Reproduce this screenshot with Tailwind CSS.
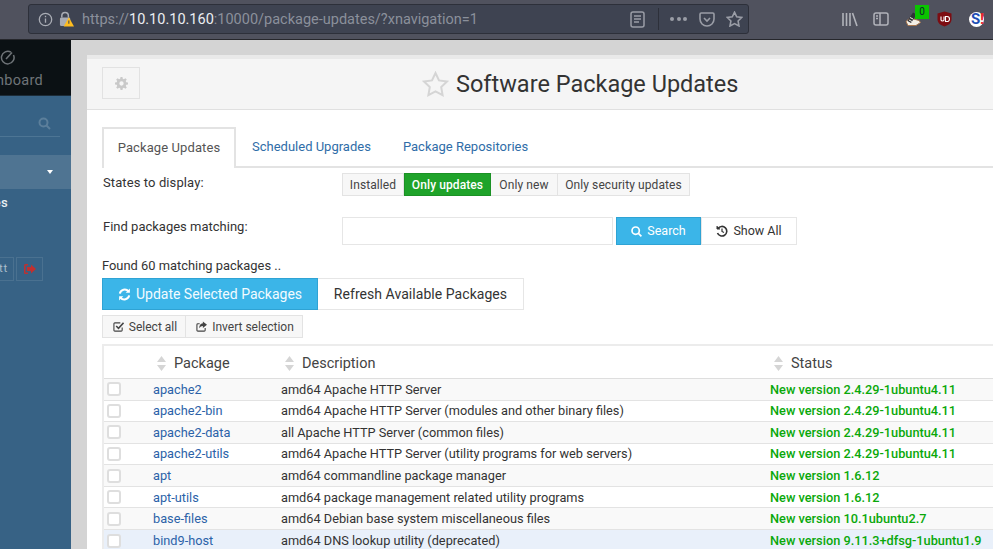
<!DOCTYPE html>
<html lang="en">
<head>
  <meta charset="UTF-8">
  <title>Software Package Updates</title>
  <script src="https://cdn.jsdelivr.net/npm/@tailwindcss/browser@4"></script>
</head>
<body class="w-[993px] h-[549px] overflow-hidden bg-[#d4d4d4] font-['Roboto',sans-serif] text-[#333] flex flex-col">

  <!-- browser toolbar -->
  <div class="h-[40px] shrink-0 bg-[#50525e] border-b border-[#26272c] flex items-center pl-[28px] pb-[5px] pt-[4px]">
    <div class="w-[721px] h-[30px] bg-[#3e4351] border border-[#2d303a] rounded-[3px] flex items-center pl-[9px] text-[#8b909b]">
      <svg class="w-[15px] h-[15px] shrink-0" viewBox="0 0 16 16" fill="none" stroke="#a9acb4" stroke-width="1.4"><circle cx="8" cy="8" r="6.6"/><path d="M8 7v4.500M8 4v1.600"/></svg>
      <svg class="w-[15px] h-[16px] ml-[6px] shrink-0" viewBox="0 0 16 17"><path d="M3 7V5a3.500 3.500 0 0 1 7 0v2" fill="none" stroke="#a9acb4" stroke-width="1.600"/><rect x="1" y="7" width="11" height="9" rx="1.500" fill="#a9acb4"/><path d="M10.500 6.500L16 16.500H5z" fill="#ffbd1f"/><path d="M10.500 10v3.500" stroke="#3e4351" stroke-width="1.100"/></svg>
      <span class="ml-[8px] mt-[2px] text-[14.500px] whitespace-nowrap">https://<span class="text-[#eceef1]">10.10.10.160</span>:10000/package-updates/?xnavigation=1</span>
      <svg class="w-[15px] h-[17px] ml-auto shrink-0" viewBox="0 0 15 17" fill="none" stroke="#9a9da6" stroke-width="1.500"><rect x="1" y="1" width="13" height="15" rx="2"/><path d="M4 5h7M4 8h7M4 11h5"/></svg>
      <div class="w-px h-[22px] bg-[#2d303a] ml-[13px]"></div>
      <div class="ml-[11px] flex gap-[2.500px]">
        <div class="w-[4px] h-[4px] rounded-full bg-[#9a9da6]"></div>
        <div class="w-[4px] h-[4px] rounded-full bg-[#9a9da6]"></div>
        <div class="w-[4px] h-[4px] rounded-full bg-[#9a9da6]"></div>
      </div>
      <svg class="w-[16px] h-[15px] ml-[12px] shrink-0" viewBox="0 0 16 15" fill="none" stroke="#9a9da6" stroke-width="1.600"><path d="M1 2.200Q1 1 2.200 1h11.600Q15 1 15 2.200V7a7 7 0 0 1-14 0z"/><path d="M5 6l3 3 3-3"/></svg>
      <svg class="w-[17px] h-[16px] ml-[11px] mr-[5px] shrink-0" viewBox="0 0 17 16" fill="none" stroke="#9a9da6" stroke-width="1.600"><path d="M8.500 1.200l2.200 4.600 5 .7-3.600 3.500.9 5-4.500-2.400L4 15l.9-5L1.300 6.500l5-.7z"/></svg>
    </div>
    <!-- right toolbar icons -->
    <svg class="w-[16px] h-[15px] ml-[93px] shrink-0" viewBox="0 0 16 15" fill="none" stroke="#b1b3ba" stroke-width="1.600"><path d="M1 1v13M4.500 1v13M8 1v13M10.500 1l4.500 13"/></svg>
    <svg class="w-[16px] h-[14px] ml-[15px] shrink-0" viewBox="0 0 16 14" fill="none" stroke="#b1b3ba" stroke-width="1.500"><rect x="1" y="1" width="14" height="12" rx="2"/><path d="M7 1v12M3 4h2M3 6.500h2"/></svg>
    <div class="relative w-[16px] h-[14px] ml-[16px] shrink-0">
      <svg class="w-[16px] h-[14px]" viewBox="0 0 16 14"><path d="M1 9.500L5 6l9 2.500 1.500 2L11 13.500H3z" fill="#f3efe6" stroke="#a8774e" stroke-width="1"/><path d="M2.500 9L8 0.500l3.500 2L6 11z" fill="#2f3036"/><path d="M5 5.500l3 1.500M4 8l3 1.500" stroke="#f3efe6" stroke-width="1"/></svg>
      <div class="absolute left-[10px] top-[-7px] w-[14px] h-[14px] bg-[#0ac400] text-[#123] text-[10px] leading-[14px] text-center">0</div>
    </div>
    <svg class="w-[15px] h-[16px] ml-[16px] shrink-0" viewBox="0 0 15 16"><path d="M7.500 0.500L14.500 2.500V9Q14 13.500 7.500 15.500 1 13.500 .5 9V2.500z" fill="#7d0d12"/><path d="M4 5.500v3.500a1.600 1.600 0 0 0 3 0V5.500M8.500 5.500v5H10a2.500 2.500 0 0 0 0-5z" fill="none" stroke="#fff" stroke-width="1.100"/></svg>
    <div class="relative w-[15px] h-[15px] ml-[17px] shrink-0 rounded-full bg-white text-[#1f4fb5] text-[15px] leading-[15px] font-bold text-center pr-[2px]">S<span class="absolute left-[11px] top-0 text-[#e8232a]">!</span></div>
  </div>

  <div class="flex flex-1 min-h-0">
    <!-- sidebar -->
    <div class="w-[71px] shrink-0 bg-[#376285] flex flex-col overflow-hidden">
      <div class="h-[56px] shrink-0 bg-[#0b1114] border-b border-[#1c2c38] flex flex-col items-end pr-[28px] pt-[10px]">
        <svg class="w-[15px] h-[15px] mr-[28px] shrink-0" viewBox="0 0 15 15" fill="none" stroke="#6f7478" stroke-width="1.500"><path d="M11 2.200A6.300 6.300 0 1 0 13.500 5"/><path d="M6 9l6-6.500"/></svg>
        <span class="text-[14.500px] leading-[17px] mt-[7px] text-[#6f7478] whitespace-nowrap tracking-[0.3px]">Dashboard</span>
      </div>
      <div class="h-[41px] mx-[-8px] shrink-0 pr-[9px] flex justify-end items-center pt-[14px] border-b border-[#4d7594] mr-[11px]">
        <svg class="w-[13px] h-[13px]" viewBox="0 0 13 13" fill="none" stroke="#5c7f9b" stroke-width="2"><circle cx="5.500" cy="5.500" r="4"/><path d="M8.500 8.500l3.500 3.500"/></svg>
      </div>
      <div class="h-[34px] mt-[18px] shrink-0 bg-[#4f7492] flex justify-end items-center pr-[18px]">
        <div class="w-0 h-0 border-x-[3.500px] border-x-transparent border-t-[4px] border-t-white"></div>
      </div>
      <div class="h-[27px] shrink-0 flex justify-end items-center pr-[63px] text-[13px] font-medium text-[#eaf0f4] tracking-[0.3px] whitespace-nowrap">Updates</div>
      <div class="flex justify-end gap-[2px] pr-[28px] mt-[41px]">
        <div class="h-[24px] w-[40px] shrink-0 border border-[#4a7190] flex items-center justify-end pr-[5px] text-[11.500px] text-[#a9bccb] tracking-[0.8px]">tt</div>
        <div class="h-[24px] w-[27px] shrink-0 border border-[#4a7190] flex items-center justify-center">
          <svg class="w-[12px] h-[10px]" viewBox="0 0 12 10" fill="#bf3030"><path d="M0 1.500A1.500 1.500 0 0 1 1.500 0H4v1.500H1.500v7H4V10H1.500A1.500 1.500 0 0 1 0 8.500z"/><path d="M3 3h4V.5L12 5l-5 4.500V7H3z"/></svg>
        </div>
      </div>
    </div>

    <!-- gutter + panel -->
    <div class="flex-1 min-w-0 pl-[16px] pt-[15px]">
      <div class="h-full bg-white overflow-hidden">
        <div class="h-[55px] bg-[#f5f5f5] border-t-[4px] border-t-[#e9e9e9] border-b border-b-[#e0e0e0] relative flex items-center">
          <div class="absolute left-[15px] top-[8px] w-[38px] h-[32px] border border-[#e2e2e2] flex items-center justify-center">
            <svg class="w-[13px] h-[13px]" viewBox="0 0 24 24" fill="#c9c9c9"><path d="M24 13.800v-3.600l-3.300-.6a9 9 0 0 0-.9-2.100l1.900-2.800-2.500-2.500-2.800 1.900a9 9 0 0 0-2.100-.9L13.800 0h-3.600l-.6 3.200a9 9 0 0 0-2.100.9L4.700 2.200 2.200 4.700l1.900 2.800a9 9 0 0 0-.9 2.100L0 10.200v3.600l3.200.6a9 9 0 0 0 .9 2.100l-1.900 2.800 2.500 2.500 2.800-1.900a9 9 0 0 0 2.100.9l.6 3.200h3.600l.6-3.200a9 9 0 0 0 2.100-.9l2.800 1.900 2.500-2.500-1.900-2.800a9 9 0 0 0 .9-2.100zM12 16a4 4 0 1 1 0-8 4 4 0 0 1 0 8z"/></svg>
          </div>
          <div class="flex items-center gap-[7px] ml-[335px]">
            <svg class="w-[27px] h-[26px]" viewBox="0 0 27 26" fill="none" stroke="#d5d5d5" stroke-width="2"><path d="M13.500 2l3.500 7.400 8 1.100-5.800 5.600 1.400 8-7.100-3.800-7.100 3.800 1.400-8L2 10.500l8-1.100z"/></svg>
            <h1 class="text-[23.500px] leading-[30px] text-[#333] whitespace-nowrap">Software Package Updates</h1>
          </div>
        </div>

        <div class="pl-[15px] pt-[17px]">
          <!-- tabs -->
          <div class="h-[41px] flex border-b-2 border-[#e3e3e3] text-[13px]">
            <div class="w-[134px] h-[41px] pb-[2px] border-2 border-b-0 border-[#e3e3e3] bg-white flex items-center justify-center text-[#555] tracking-[0.1px]">Package Updates</div>
            <div class="ml-[16px] h-[40px] flex items-center text-[#2f6da8]">Scheduled Upgrades</div>
            <div class="ml-[32px] h-[40px] flex items-center text-[#2f6da8]">Package Repositories</div>
          </div>

          <!-- states -->
          <div class="flex mt-[5px] h-[24px] text-[13px]">
            <div class="w-[240px] pl-px leading-[20px] tracking-[0.1px]">States to display:</div>
            <div class="flex text-[12px] text-[#444] tracking-[0.1px]">
              <div class="h-[23px] w-[62px] bg-[#f7f7f7] border border-[#e3e3e3] flex items-center justify-center">Installed</div>
              <div class="h-[23px] w-[87px] bg-[#1fa32a] border border-[#1b9125] text-white font-medium flex items-center justify-center">Only updates</div>
              <div class="h-[23px] w-[66px] bg-[#f7f7f7] border-y border-[#e3e3e3] flex items-center justify-center">Only new</div>
              <div class="h-[23px] w-[133px] bg-[#f7f7f7] border border-[#e3e3e3] flex items-center justify-center">Only security updates</div>
            </div>
          </div>

          <!-- search -->
          <div class="flex mt-[20px] h-[28px] text-[13px]">
            <div class="w-[240px] pl-px leading-[19px]">Find packages matching:</div>
            <div class="w-[271px] h-[28px] border border-[#e6e6e6]"></div>
            <div class="ml-[3px] w-[85px] h-[28px] bg-[#3bb5e8] border border-[#2fa3d4] text-white text-[12.500px] flex items-center justify-center gap-[5px]">
              <svg class="w-[11px] h-[11px]" viewBox="0 0 13 13" fill="none" stroke="#fff" stroke-width="2"><circle cx="5.500" cy="5.500" r="4.300"/><path d="M8.500 8.500l3.800 3.800"/></svg>
              Search
            </div>
            <div class="w-[96px] h-[28px] border border-[#e6e6e6] text-[12.500px] flex items-center justify-center gap-[5px]">
              <svg class="w-[12px] h-[12px]" viewBox="0 0 12 12" fill="none" stroke="#333" stroke-width="1.600"><path d="M2 3.500A4.800 4.800 0 1 1 1.500 8"/><path d="M1 1v3h3" fill="#333" stroke-width="1"/><path d="M6 3.500V6.500l2 1" stroke-width="1.200"/></svg>
              Show All
            </div>
          </div>

          <p class="mt-[13px] text-[12.900px] leading-[16px]">Found 60 matching packages ..</p>

          <div class="flex mt-[4px] h-[32px] text-[14px]">
            <div class="w-[216px] bg-[#3bb5e8] border border-[#2fa3d4] text-[#f2fbff] flex items-center justify-center gap-[5px]">
              <svg class="w-[13px] h-[13px]" viewBox="0 0 14 14" fill="none" stroke="#fff" stroke-width="2.200"><path d="M2 6a5.200 5.200 0 0 1 9.300-2.300M12 8a5.200 5.200 0 0 1-9.300 2.300"/><path d="M12.800 .5v4.500H8.300z" fill="#fff" stroke="none"/><path d="M1.200 13.500V9h4.500z" fill="#fff" stroke="none"/></svg>
              Update Selected Packages
            </div>
            <div class="w-[206px] border border-[#e6e6e6] border-l-0 flex items-center justify-center tracking-[0.05px]">Refresh Available Packages</div>
          </div>

          <div class="flex mt-[5px] h-[23px] text-[12px] text-[#444]">
            <div class="w-[84px] pl-[2px] bg-[#f7f7f7] border border-[#e3e3e3] flex items-center justify-center gap-[5px]">
              <svg class="w-[11px] h-[11px]" viewBox="0 0 12 12" fill="none" stroke="#444" stroke-width="1.200"><path d="M10 7v3a1 1 0 0 1-1 1H2a1 1 0 0 1-1-1V3a1 1 0 0 1 1-1h6"/><path d="M3.500 5.500L6 8l5.500-6" stroke-width="1.700"/></svg>
              Select all
            </div>
            <div class="w-[117px] pl-[2px] bg-[#f7f7f7] border-y border-r border-[#e3e3e3] flex items-center justify-center gap-[5px]">
              <svg class="w-[11px] h-[11px]" viewBox="0 0 12 12" fill="none" stroke="#444" stroke-width="1.200"><path d="M10 7.500V10a1 1 0 0 1-1 1H2a1 1 0 0 1-1-1V4a1 1 0 0 1 1-1h2"/><path d="M7.500 .5L12 4 7.500 7.500V5.500Q5 5.500 3.500 8 3.500 3 7.500 2.500z" fill="#444" stroke="none"/></svg>
              Invert selection
            </div>
          </div>

          <!-- package table -->
          <div class="mt-[6px] border-t-2 border-l-2 border-[#ececec] text-[12.750px]">
            <div class="h-[33px] pt-[3px] flex items-center border-b border-[#dedede] text-[14.500px] text-[#444]">
              <svg class="w-[9px] h-[15px] ml-[53px] shrink-0" viewBox="0 0 9 15" fill="#d5d5d5"><path d="M4.500 0L9 6H0zM4.500 15L0 9h9z"/></svg>
              <span class="ml-[8px] w-[111px] shrink-0">Package</span>
              <svg class="w-[9px] h-[15px] shrink-0" viewBox="0 0 9 15" fill="#d5d5d5"><path d="M4.500 0L9 6H0zM4.500 15L0 9h9z"/></svg>
              <span class="ml-[8px] w-[472px] shrink-0">Description</span>
              <svg class="w-[9px] h-[15px] shrink-0" viewBox="0 0 9 15" fill="#d5d5d5"><path d="M4.500 0L9 6H0zM4.500 15L0 9h9z"/></svg>
              <span class="ml-[8px]">Status</span>
            </div>

            <div class="h-[21.570px] bg-[#f9f9f9] border-b border-[#e3e3e3] flex items-center whitespace-nowrap">
              <div class="w-[49px] shrink-0 pl-[3px]"><div class="w-[14px] h-[14px] bg-white border-2 border-[#dedede] rounded-[3px]"></div></div>
              <a class="w-[128px] shrink-0 text-[#2b62a8]">apache2</a>
              <span class="w-[489px] shrink-0">amd64 Apache HTTP Server</span>
              <span class="text-[#0aa80a] font-medium">New version 2.4.29-1ubuntu4.11</span>
            </div>
            <div class="h-[21.570px] bg-white border-b border-[#e3e3e3] flex items-center whitespace-nowrap">
              <div class="w-[49px] shrink-0 pl-[3px]"><div class="w-[14px] h-[14px] bg-white border-2 border-[#dedede] rounded-[3px]"></div></div>
              <a class="w-[128px] shrink-0 text-[#2b62a8]">apache2-bin</a>
              <span class="w-[489px] shrink-0">amd64 Apache HTTP Server (modules and other binary files)</span>
              <span class="text-[#0aa80a] font-medium">New version 2.4.29-1ubuntu4.11</span>
            </div>
            <div class="h-[21.570px] bg-[#f9f9f9] border-b border-[#e3e3e3] flex items-center whitespace-nowrap">
              <div class="w-[49px] shrink-0 pl-[3px]"><div class="w-[14px] h-[14px] bg-white border-2 border-[#dedede] rounded-[3px]"></div></div>
              <a class="w-[128px] shrink-0 text-[#2b62a8]">apache2-data</a>
              <span class="w-[489px] shrink-0">all Apache HTTP Server (common files)</span>
              <span class="text-[#0aa80a] font-medium">New version 2.4.29-1ubuntu4.11</span>
            </div>
            <div class="h-[21.570px] bg-white border-b border-[#e3e3e3] flex items-center whitespace-nowrap">
              <div class="w-[49px] shrink-0 pl-[3px]"><div class="w-[14px] h-[14px] bg-white border-2 border-[#dedede] rounded-[3px]"></div></div>
              <a class="w-[128px] shrink-0 text-[#2b62a8]">apache2-utils</a>
              <span class="w-[489px] shrink-0">amd64 Apache HTTP Server (utility programs for web servers)</span>
              <span class="text-[#0aa80a] font-medium">New version 2.4.29-1ubuntu4.11</span>
            </div>
            <div class="h-[21.570px] bg-[#f9f9f9] border-b border-[#e3e3e3] flex items-center whitespace-nowrap">
              <div class="w-[49px] shrink-0 pl-[3px]"><div class="w-[14px] h-[14px] bg-white border-2 border-[#dedede] rounded-[3px]"></div></div>
              <a class="w-[128px] shrink-0 text-[#2b62a8]">apt</a>
              <span class="w-[489px] shrink-0">amd64 commandline package manager</span>
              <span class="text-[#0aa80a] font-medium">New version 1.6.12</span>
            </div>
            <div class="h-[21.570px] bg-white border-b border-[#e3e3e3] flex items-center whitespace-nowrap">
              <div class="w-[49px] shrink-0 pl-[3px]"><div class="w-[14px] h-[14px] bg-white border-2 border-[#dedede] rounded-[3px]"></div></div>
              <a class="w-[128px] shrink-0 text-[#2b62a8]">apt-utils</a>
              <span class="w-[489px] shrink-0">amd64 package management related utility programs</span>
              <span class="text-[#0aa80a] font-medium">New version 1.6.12</span>
            </div>
            <div class="h-[21.570px] bg-[#f9f9f9] border-b border-[#e3e3e3] flex items-center whitespace-nowrap">
              <div class="w-[49px] shrink-0 pl-[3px]"><div class="w-[14px] h-[14px] bg-white border-2 border-[#dedede] rounded-[3px]"></div></div>
              <a class="w-[128px] shrink-0 text-[#2b62a8]">base-files</a>
              <span class="w-[489px] shrink-0">amd64 Debian base system miscellaneous files</span>
              <span class="text-[#0aa80a] font-medium">New version 10.1ubuntu2.7</span>
            </div>
            <div class="h-[21.570px] bg-[#e9f0fa] flex items-center whitespace-nowrap">
              <div class="w-[49px] shrink-0 pl-[3px]"><div class="w-[14px] h-[14px] bg-white border-2 border-[#dedede] rounded-[3px]"></div></div>
              <a class="w-[128px] shrink-0 text-[#2b62a8]">bind9-host</a>
              <span class="w-[489px] shrink-0">amd64 DNS lookup utility (deprecated)</span>
              <span class="text-[#0aa80a] font-medium">New version 9.11.3+dfsg-1ubuntu1.9</span>
            </div>
          </div>
        </div>
      </div>
    </div>
  </div>
</body>
</html>
